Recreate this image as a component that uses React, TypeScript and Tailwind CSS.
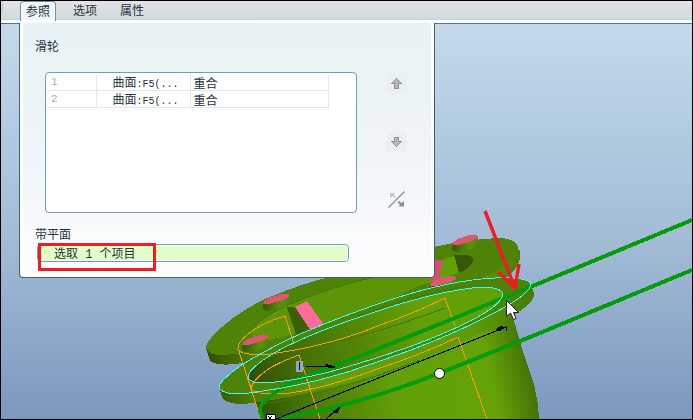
import { useState } from "react";

const tabs = ["参照", "选项", "属性"];

const pulleys = [
  { id: 1, surface: "曲面", feature: ":F5(...", constraint: "重合" },
  { id: 2, surface: "曲面", feature: ":F5(...", constraint: "重合" },
];

// edges of the front flange, used for the faces and for the highlight
const outerEdge =
  "M219 387 Q219 381 243 364 Q275 345 300 334 Q350 313 390 300 Q450 280 495 278 Q529 277 531 284 Q530 295 490 315 Q440 341 380 361 Q310 387 240 394 Q221 394 219 387 Z";
const innerEdge =
  "M248 377 Q248 367 285 347 Q320 330 360 317 Q440 289 485 287 Q503 288 503 295 Q499 308 460 326 Q420 345 360 363 Q300 382 260 383 Q249 382 248 377 Z";

const Boss = ({ x, y }: { x: number; y: number }) => (
  <g transform={`translate(${x} ${y})`}>
    <path d="M-13 4 L-13 10 Q-11 13 -2 11 Q9 9 13 4 L13 -4 Z" fill="url(#boss)" />
    <path d="M-13 5 Q-13 1 -2 -3 Q9 -7 13 -4 Q14 -1 3 2 Q-8 6 -13 5 Z" fill="#de5670" />
  </g>
);

const Scene = () => (
  <svg
    className="absolute inset-0 h-full w-full"
    viewBox="1 24 691 395"
    preserveAspectRatio="xMinYMin slice"
    shapeRendering="crispEdges"
    aria-hidden="true"
  >
    <defs>
      <linearGradient id="boss" x1="0" x2="1">
        <stop offset="0" stopColor="#355605" />
        <stop offset="0.7" stopColor="#5a9408" />
        <stop offset="1" stopColor="#4f8307" />
      </linearGradient>
      <linearGradient id="rim" x1="206" x2="536" gradientUnits="userSpaceOnUse">
        <stop offset="0" stopColor="#304f04" />
        <stop offset="0.14" stopColor="#4c7d07" />
        <stop offset="0.4" stopColor="#62a008" />
        <stop offset="0.8" stopColor="#5f9b08" />
        <stop offset="1" stopColor="#487806" />
      </linearGradient>
      <linearGradient id="groove" x1="248" y1="380" x2="420" y2="320" gradientUnits="userSpaceOnUse">
        <stop offset="0" stopColor="#304f04" />
        <stop offset="0.3" stopColor="#446f05" />
        <stop offset="1" stopColor="#62a008" />
      </linearGradient>
      <linearGradient id="drum" x1="255" y1="410" x2="535" y2="350" gradientUnits="userSpaceOnUse">
        <stop offset="0" stopColor="#304f04" />
        <stop offset="0.2" stopColor="#4b7b06" />
        <stop offset="0.5" stopColor="#62a008" />
        <stop offset="0.83" stopColor="#64a208" />
        <stop offset="1" stopColor="#3e6805" />
      </linearGradient>
    </defs>

    {/* drum */}
    <path d="M250 390 L262 419 H539 L538 404 L534 385 L521 345 L512 314 L400 320 Z" fill="url(#drum)" />

    {/* back flange */}
    <path d="M206 348 L210 361 Q219 367 243 363 L300 352 L500 282 Q517 272 520 258 L520 250 L434 262 Z" fill="url(#rim)" />
    <path d="M206 348 Q205 340 233 318 Q248 307 265 299 Q300 284 333 276 L434 247 Q468 239 500 238 Q517 239 518 248 Q518 260 490 274 Q440 299 350 327 Q265 353 222 355 Q209 355 206 348 Z" fill="#4f8307" />
    <path d="M251 331 Q261 315 300 300 Q340 284 380 276 L434 277 Q446 280 418 286 Q380 306 350 316 Q290 337 255 343 Z" fill="#5c9608" />
    <path d="M251 331 Q261 315 300 300 Q340 284 380 276" fill="none" stroke="#467406" />
    <path d="M443 260 Q455 254 468 255 Q474 257 473 261 Q470 268 459 273 L438 279 Z" fill="#62a008" />
    <path d="M454 255 L468 255 Q474 257 473 261 Q470 268 459 273 Z" fill="#365805" />
    <path d="M434 260 L443 260 L439 279 L430 283 Z" fill="#d3506d" />
    <path d="M287 307 L295 307 L311 330 L312 332 L296 334 Z" fill="#3b6005" />
    <path d="M295 307 L307 301 L324 325 L311 331 Z" fill="#ff6b9a" />
    <Boss x={276} y={299} />
    <Boss x={255} y={340} />
    <Boss x={465} y={240} />
    <Boss x={443} y={281} />

    {/* front flange */}
    <path d="M219 387 L223 399 Q231 406 253 403 Q330 392 420 360 Q490 330 517 313 Q534 302 534 294 L531 283 Z" fill="url(#rim)" />
    <path d={outerEdge} fill="#4f8307" />
    <path d={innerEdge} fill="url(#groove)" />
    <path d="M262 404 Q330 395 420 360 M358 316 Q420 294 466 286 M285 350 Q350 344 445 308" fill="none" stroke="#467406" />

    {/* feature sketches */}
    <g fill="none" stroke="#ff9a0a">
      <path d="M294 344 L285 316 Q268 321 255 329 Q237 341 238 349 Q240 356 270 354 Q330 346 380 325 Q415 313 445 298 L455 326" />
      <path d="M239 352 L261 419" />
      <path d="M320 419 L299 355 Q280 362 270 368 Q252 380 251 389 Q255 396 290 393 Q330 387 380 368 Q425 353 458 337 L487 419" />
    </g>

    {/* belt */}
    <g fill="none" stroke="#059c0a" strokeWidth="4">
      <path d="M692 220 L540 283 L440 324 L360 356 L300 379 Q258 399 260 411 L263 419" />
      <path d="M692 270 L540 333 L440 373 Q350 408 275 419" />
    </g>
    <g fill="none" stroke="#35fff5">
      <path d={outerEdge} />
      <path d={innerEdge} />
    </g>

    {/* dimension arrows */}
    <g fill="#05052f" stroke="#05052f">
      <path d="M276 419 L506 327 V331" fill="none" />
      <path d="M496 330 L501 326 L504 328 L499 331 Z" />
      <path d="M306 366 H327 M325 364 L335 367 L329 368 Z" />
      <path d="M326 419 L335 411 M333 412 L340 407 L337 413 Z" />
    </g>
    <path d="M296 361 H303 V372 H296 Z" fill="#8fa8c4" />
    <path d="M299.500 362 V370" stroke="#05052f" />
    <path d="M266 414 H275 V421 H266 Z" fill="#fff" stroke="#000" />
    <path d="M268 416 L272 420 M272 416 L268 420" stroke="#000" />
    <circle cx="439.500" cy="373.500" r="5" fill="#fff" stroke="#000" shapeRendering="auto" />

    <path d="M485 211 L515 288 M498 272 L515 288 L519 264" fill="none" stroke="#ee1c24" strokeWidth="3.500" shapeRendering="auto" />
    <path
      d="M506.500 300.500 V316.500 L510.500 313 L513.500 319.500 L516 318.500 L513.500 312.500 H518.500 Z"
      fill="#fff"
      stroke="#222"
      shapeRendering="auto"
    />
  </svg>
);

const ArrowIcon = () => (
  <svg width="11" height="11" viewBox="0 0 11 11" shapeRendering="crispEdges">
    <path d="M5.500 0.500 L10.500 5.500 H7.500 V10 H3.500 V5.500 H0.500 Z" fill="#b4b8bb" stroke="#8f9497" />
  </svg>
);

const FlipIcon = () => (
  <svg width="17" height="17" viewBox="0 0 17 17">
    <path d="M0.500 16.500 L16.500 0.500" stroke="#94999d" strokeWidth="1.500" />
    <path d="M2 2 H7 L5.500 3.500 L8 6 L6.500 7 L4.500 5 L2 7 Z" fill="#bfc3c6" />
    <path d="M16 15.500 H10.500 L12 13.500 L9.500 11.500 L11 10 L13.500 12 L16 10 Z" fill="#8c9195" />
  </svg>
);

const ReferencesPanel = () => (
  <section className="relative -mt-px ml-[18px] w-[416px] max-w-full rounded-b border border-t-0 border-[#3f6078] bg-white px-[3px] pb-[3px] font-['Noto_Sans_CJK_SC',sans-serif] text-xs leading-4 text-[#25343c]">
    <div className="rounded bg-linear-to-b from-[#e8f2f5] via-[#eff4f8] to-[#fdfdfe] px-3 pt-[15px] pb-3">
      <h2>滑轮</h2>
      <div className="mt-[18px] ml-[10px] flex">
        <div className="h-[141px] w-[312px] rounded border border-[#6d9fb5] bg-white p-px">
          <table className="w-[282px] table-fixed border-collapse">
            <tbody>
              {pulleys.map((row) => (
                <tr key={row.id} className="h-4 border-b border-[#dbe8f0]">
                  <td className="w-[49px] border-r border-[#dbe8f0] px-1 py-0 align-middle font-['Liberation_Mono',monospace] text-[11px] leading-[15px] text-[#adb0a8]">
                    {row.id}
                  </td>
                  <td className="w-[94px] border-r border-[#dbe8f0] py-0 pl-4 align-middle leading-[15px] whitespace-nowrap">
                    {row.surface}
                    <span className="font-['Liberation_Mono',monospace] text-[10px] leading-none">{row.feature}</span>
                  </td>
                  <td className="border-r border-[#dbe8f0] px-[3px] py-0 align-middle leading-[15px]">{row.constraint}</td>
                </tr>
              ))}
            </tbody>
          </table>
        </div>
        <div className="ml-[30px] flex flex-col gap-[39px] pt-[2px]">
          <button aria-label="上移" className="flex size-[19px] items-center justify-center bg-[#ebeff2]">
            <ArrowIcon />
          </button>
          <button aria-label="下移" className="flex size-[19px] rotate-180 items-center justify-center bg-[#ebeff2]">
            <ArrowIcon />
          </button>
          <button aria-label="反向" className="flex size-[19px] items-center justify-center">
            <FlipIcon />
          </button>
        </div>
      </div>
      <label htmlFor="belt-plane" className="mt-[13px] block">
        带平面
      </label>
      <div className="relative ml-[2px] mt-[2px] w-[312px]">
        <input
          id="belt-plane"
          readOnly
          value="选取 1 个项目"
          className="block h-[18px] w-full rounded border border-[#6d9fb5] bg-[#e2ffc8] px-4 font-['Liberation_Mono','Noto_Sans_CJK_SC',monospace] text-xs leading-4 outline-1 -outline-offset-2 outline-white"
        />
        <div className="pointer-events-none absolute -top-px left-px h-7 w-[118px] border-3 border-[#ee1c24]" />
      </div>
    </div>
  </section>
);

const App = () => {
  const [active, setActive] = useState(tabs[0]);

  return (
    <div className="flex min-h-screen flex-col border border-black bg-white">
      <header className="h-[22px] bg-white">
        <div
          role="tablist"
          className="flex h-[19px] gap-[11px] border-b border-[#c0d4de] bg-linear-to-b from-[#e5e2e5] to-[#d0dbdd] font-['Noto_Sans_CJK_SC',sans-serif] text-xs text-[#25343c]"
        >
          <div className="h-3 w-[2px] border-r border-[#b3c3cf]" />
          {tabs.map((tab) => (
            <button
              key={tab}
              role="tab"
              aria-selected={tab === active}
              onClick={() => setActive(tab)}
              className={
                tab === active
                  ? "ml-[6px] h-5 rounded-t border border-b-0 border-[#6f8fa3] bg-[#f0f6fa] px-[5px] pb-[2px] leading-4 ring-1 ring-white ring-inset"
                  : "h-[18px] px-[6px] leading-[18px]"
              }
            >
              {tab}
            </button>
          ))}
        </div>
      </header>
      <main className="relative flex-1 border-t border-[#50758c] bg-linear-to-b from-[#c4daeb] via-[#a2bcd6] via-55% to-[#7b98bf]">
        <Scene />
        <ReferencesPanel />
      </main>
    </div>
  );
};

export default App;
